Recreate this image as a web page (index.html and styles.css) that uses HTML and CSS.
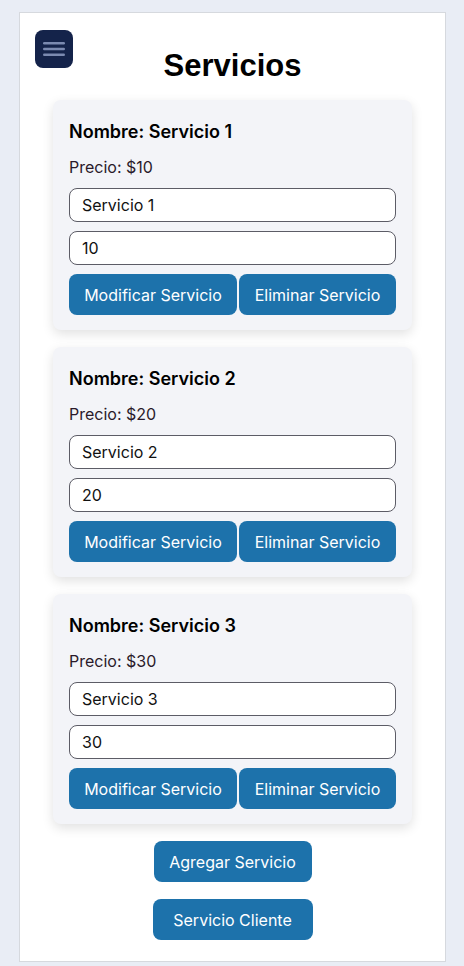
FILE: index.html
```html
<!DOCTYPE html>
<html lang="es">
<head>
<meta charset="utf-8">
<title>Servicios</title>
<link rel="stylesheet" href="styles.css">
</head>
<body>
<div class="page">
  <button class="menu-btn" aria-label="menu">
    <svg width="22" height="16" viewBox="0 0 22 16"><rect x="0" y="1" width="22" height="2.4" rx="1.2" fill="#7b8ab0"/><rect x="0" y="6.8" width="22" height="2.4" rx="1.2" fill="#7b8ab0"/><rect x="0" y="12.6" width="22" height="2.4" rx="1.2" fill="#7b8ab0"/></svg>
  </button>
  <h1 class="title">Servicios</h1>
  <div class="list">
    <div class="card">
      <h3 class="name">Nombre: Servicio 1</h3>
      <p class="price">Precio: $10</p>
      <input class="field" type="text" value="Servicio 1">
      <input class="field" type="text" value="10">
      <div class="actions">
        <button class="btn btn-mod">Modificar Servicio</button>
        <button class="btn btn-del">Eliminar Servicio</button>
      </div>
    </div>
    <div class="card">
      <h3 class="name">Nombre: Servicio 2</h3>
      <p class="price">Precio: $20</p>
      <input class="field" type="text" value="Servicio 2">
      <input class="field" type="text" value="20">
      <div class="actions">
        <button class="btn btn-mod">Modificar Servicio</button>
        <button class="btn btn-del">Eliminar Servicio</button>
      </div>
    </div>
    <div class="card">
      <h3 class="name">Nombre: Servicio 3</h3>
      <p class="price">Precio: $30</p>
      <input class="field" type="text" value="Servicio 3">
      <input class="field" type="text" value="30">
      <div class="actions">
        <button class="btn btn-mod">Modificar Servicio</button>
        <button class="btn btn-del">Eliminar Servicio</button>
      </div>
    </div>
  </div>
  <div class="bottom">
    <button class="btn btn-add">Agregar Servicio</button>
    <button class="btn btn-client">Servicio Cliente</button>
  </div>
</div>
</body>
</html>
```

FILE: styles.css
```css
* { box-sizing: border-box; }
html, body { margin: 0; padding: 0; }
body {
  background: #e9edf5;
  font-family: Inter, "Noto Sans", sans-serif;
  color: #111;
  padding: 12px 18px 0 19px;
  height: 966px;
  overflow: hidden;
}
.page {
  background: #fff;
  border: 1px solid #d6d9de;
  height: 950px;
  padding: 17px 0 0 0;
  position: relative;
}
.menu-btn {
  position: absolute;
  left: 15px;
  top: 17px;
  width: 38px;
  height: 38px;
  border-radius: 8px;
  border: none;
  background: #14234a;
  display: flex;
  align-items: center;
  justify-content: center;
  padding: 0;
}
.title {
  font-family: "Liberation Sans", Arial, sans-serif;
  font-weight: 700;
  font-size: 31px;
  text-align: center;
  margin: 17px 0 15px 0;
  line-height: 38px;
  color: #000;
}
.list {
  display: flex;
  flex-direction: column;
  gap: 17px;
  padding: 0 33px 0 33px;
}
.card {
  background: #f3f4f8;
  border-radius: 8px;
  box-shadow: 0 4px 12px rgba(0,0,0,0.12);
  padding: 21px 16px 15px 16px;
  display: flex;
  flex-direction: column;
}
.name {
  margin: 0;
  font-size: 18px;
  font-weight: 560;
  line-height: 22px;
  color: #000;
}
.price {
  margin: 13px 0 10px 0;
  font-size: 16px;
  line-height: 22px;
  color: #2a1a2a;
}
.field {
  height: 34px;
  border: 1px solid #5c5c66;
  border-radius: 8px;
  background: #fff;
  font-family: Inter, "Noto Sans", sans-serif;
  font-size: 16px;
  padding: 0 12px;
  color: #111;
  margin-bottom: 9px;
  width: 100%;
}
.actions {
  display: flex;
  gap: 2px;
}
.btn {
  background: #1d72ab;
  color: #fff;
  border: none;
  border-radius: 8px;
  font-family: Inter, "Noto Sans", sans-serif;
  font-size: 16px;
  height: 41px;
  padding: 0;
}
.btn-mod { width: 168px; }
.btn-del { flex: 1; }
.bottom {
  display: flex;
  flex-direction: column;
  align-items: center;
  gap: 17px;
  margin-top: 17px;
}
.btn-add { width: 158px; }
.btn-client { width: 160px; }
```
